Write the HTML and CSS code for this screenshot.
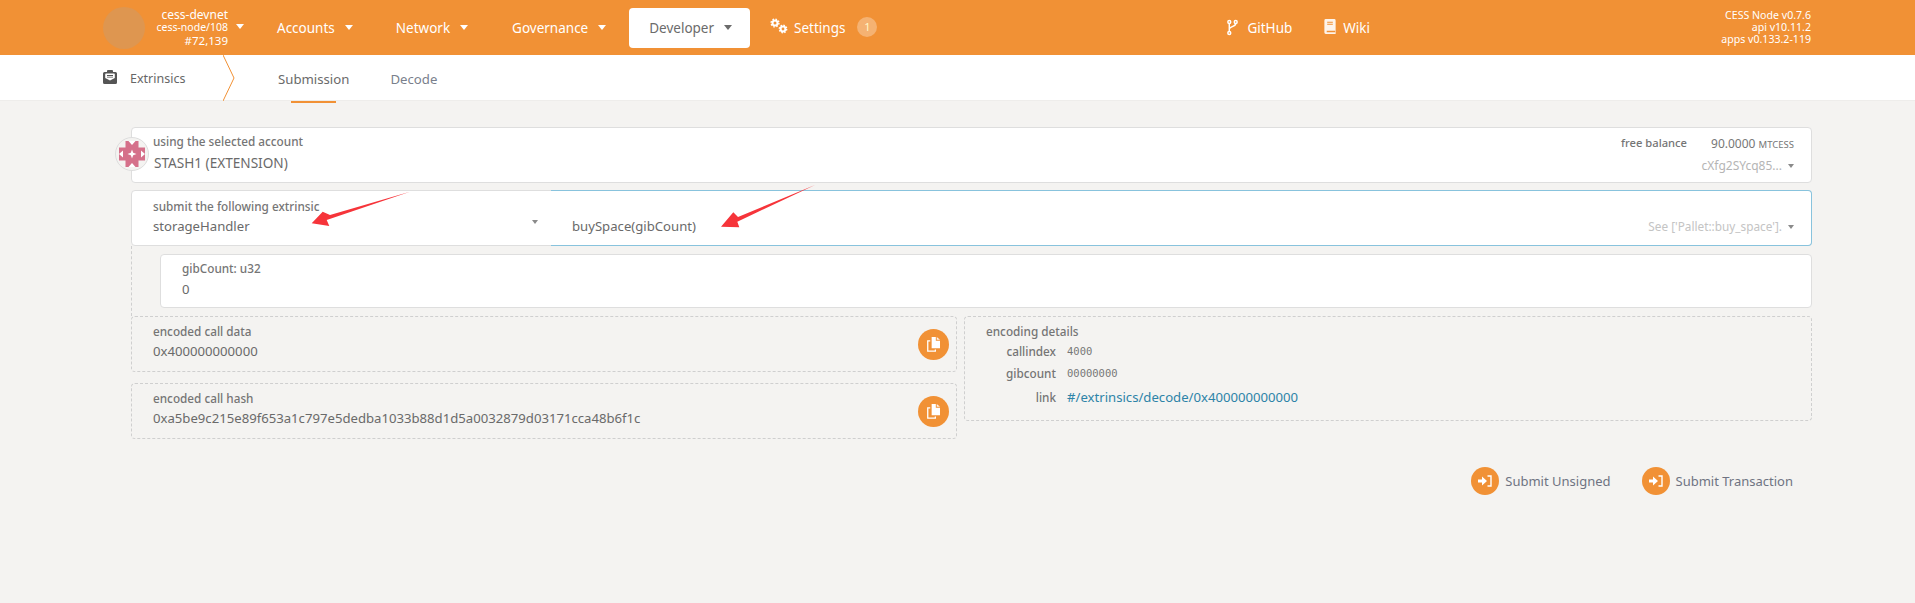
FILE: index.html
```html
<!DOCTYPE html>
<html lang="en">
<head>
<meta charset="utf-8">
<title>Extrinsics</title>
<link rel="stylesheet" href="styles.css">
</head>
<body>
<header class="menu">
  <div class="chain">
    <div class="chain-logo"></div>
    <div class="chain-info">
      <div>cess-devnet</div>
      <div class="chain-node">cess-node/108</div>
      <div>#72,139</div>
    </div>
    <span class="caret chain-caret"></span>
  </div>
  <nav class="nav">
    <a class="nav-item">Accounts<span class="caret"></span></a>
    <a class="nav-item">Network<span class="caret"></span></a>
    <a class="nav-item">Governance<span class="caret"></span></a>
    <a class="nav-item active">Developer<span class="caret"></span></a>
    <a class="nav-settings">
      <svg class="ico-cogs" viewBox="0 0 18 16"><g fill="none" stroke="#fff"><circle cx="5" cy="5" r="2.500" stroke-width="2"/><circle cx="5" cy="5" r="3.900" stroke-width="1.400" stroke-dasharray="1.600 1.460"/><circle cx="13" cy="11" r="2.400" stroke-width="2"/><circle cx="13" cy="11" r="3.700" stroke-width="1.400" stroke-dasharray="1.500 1.400"/></g></svg>
      Settings<span class="badge">1</span>
    </a>
  </nav>
  <div class="links">
    <a class="link-item">
      <svg class="ico-git" viewBox="0 0 12 18"><g fill="none" stroke="#fff" stroke-width="1.600"><circle cx="2.500" cy="3" r="1.600"/><circle cx="2.500" cy="15" r="1.600"/><circle cx="9.500" cy="3" r="1.600"/><path d="M2.500 4.600v8.800M9.500 4.600c0 4-7 3-7 6.400"/></g></svg>
      GitHub
    </a>
    <a class="link-item">
      <svg class="ico-book" viewBox="0 0 12 16"><path fill="#fff" fill-opacity=".9" d="M1.500 0h9A1.500 1.500 0 0 1 12 1.500V16H1.500A1.500 1.500 0 0 1 0 14.500V1.500A1.500 1.500 0 0 1 1.500 0z"/><path fill="#f19135" d="M2.500 12.500h9V14h-9zM3 3h6v1H3zM3 5h6v1H3z"/></svg>
      Wiki
    </a>
  </div>
  <div class="versions">
    <div>CESS Node v0.7.6</div>
    <div>api v10.11.2</div>
    <div>apps v0.133.2-119</div>
  </div>
</header>

<div class="tabs">
  <div class="tabs-title">
    <svg class="ico-inbox" viewBox="0 0 14 14"><path fill="#555" d="M5 0h4a1 1 0 0 1 1 1v1h2.500A1.500 1.500 0 0 1 14 3.500v9a1.500 1.500 0 0 1-1.500 1.500h-11A1.500 1.500 0 0 1 0 12.500v-9A1.500 1.500 0 0 1 1.500 2H4V1a1 1 0 0 1 1-1z"/><path fill="#fff" d="M3 3.500h8a.8.8 0 0 1 .8.800V8L7 10.500 2.200 8V4.300a.8.8 0 0 1 .8-.8z"/><path fill="#555" d="M4 5h6v1H4zM4 6.800h6v.8H4z"/></svg>
    <span>Extrinsics</span>
  </div>
  <svg class="tabs-chevron" viewBox="0 0 12 46"><path d="M0 0l11 23L0 46" fill="none" stroke="#f19135" stroke-width="1"/></svg>
  <a class="tab current">Submission</a>
  <a class="tab">Decode</a>
</div>

<main class="content">
  <div class="row account">
    <svg class="identicon" viewBox="0 0 34 34">
      <circle cx="17" cy="17" r="16.500" fill="#f4f3f1" stroke="#ddd"/>
      <path fill="#d5708a" d="M10.500 4h13v6.500H30v13h-6.500V30h-13v-6.500H4v-13h6.500z"/>
      <path fill="#fff" d="M13.500 4L17 8l3.500-4zM13.500 30l3.500-4 3.500 4zM4 17l4-3.500v7zM30 17l-4-3.500v7zM17 12.500l1.200 3.300 3.300 1.200-3.300 1.200-1.200 3.300-1.200-3.300-3.300-1.200 3.300-1.200z"/>
    </svg>
    <div class="account-main">
      <label class="lbl">using the selected account</label>
      <div class="val account-name">STASH1 (EXTENSION)</div>
    </div>
    <div class="account-side">
      <div class="balance"><span class="lbl balance-lbl">free balance</span><span class="amount">90.0000 <small>MTCESS</small></span></div>
      <div class="addr">cXfg2SYcq85...<span class="caret small"></span></div>
    </div>
  </div>

  <div class="row extrinsic">
    <div class="pallet">
      <label class="lbl">submit the following extrinsic</label>
      <div class="val">storageHandler</div>
      <span class="caret small pallet-caret"></span>
    </div>
    <div class="method">
      <div class="val">buySpace(gibCount)</div>
      <div class="method-hint">See ['Pallet::buy_space'].<span class="caret small"></span></div>
    </div>
  </div>

  <div class="params">
    <div class="param">
      <label class="lbl">gibCount: u32</label>
      <div class="val">0</div>
    </div>
  </div>

  <div class="encoded">
    <div class="encoded-left">
      <div class="dash-box">
        <div><label class="lbl">encoded call data</label><div class="val">0x400000000000</div></div>
        <button class="copy"><svg viewBox="0 0 14 16"><path fill="#fff" d="M5 0h4.500v4H14v8H5z"/><path fill="#fff" fill-opacity=".9" d="M10.500 0L14 3h-3.500z"/><path fill="none" stroke="#fff" stroke-width="1.400" d="M3.500 4H.8v11.200H9V13.500"/></svg></button>
      </div>
      <div class="dash-box">
        <div><label class="lbl">encoded call hash</label><div class="val">0xa5be9c215e89f653a1c797e5dedba1033b88d1d5a0032879d03171cca48b6f1c</div></div>
        <button class="copy"><svg viewBox="0 0 14 16"><path fill="#fff" d="M5 0h4.500v4H14v8H5z"/><path fill="#fff" fill-opacity=".9" d="M10.500 0L14 3h-3.500z"/><path fill="none" stroke="#fff" stroke-width="1.400" d="M3.500 4H.8v11.200H9V13.500"/></svg></button>
      </div>
    </div>
    <div class="details">
      <div class="details-title lbl">encoding details</div>
      <div class="details-grid">
        <span class="lbl">callindex</span><span class="mono">4000</span>
        <span class="lbl">gibcount</span><span class="mono">00000000</span>
        <span class="lbl">link</span><a class="hash-link">#/extrinsics/decode/0x400000000000</a>
      </div>
    </div>
  </div>

  <div class="actions">
    <a class="action"><span class="action-ico"><svg viewBox="0 0 14 12"><path fill="#fff" d="M0 4.500h4v-3L9 6l-5 4.500v-3H0z"/><path fill="none" stroke="#fff" stroke-width="1.400" d="M9.500 1H13v10H9.500"/></svg></span>Submit Unsigned</a>
    <a class="action"><span class="action-ico"><svg viewBox="0 0 14 12"><path fill="#fff" d="M0 4.500h4v-3L9 6l-5 4.500v-3H0z"/><path fill="none" stroke="#fff" stroke-width="1.400" d="M9.500 1H13v10H9.500"/></svg></span>Submit Transaction</a>
  </div>
</main>

<svg class="arrows" viewBox="0 0 1915 603">
  <path fill="#f6343a" d="M322.700 211.700L330 215 410 191.700 326.700 220 329.300 226 311.700 223.300z"/>
  <path fill="#f6343a" d="M733.300 212.300L738 217 815 185 737.300 221.700 739.300 227.300 721 226.700z"/>
</svg>
</body>
</html>
```
FILE: styles.css
```css
* { box-sizing: border-box; }
html, body { margin: 0; padding: 0; }
body {
  position: relative;
  height: 603px;
  overflow: hidden;
  background: #f4f3f1;
  color: #4e4e4e;
  font-family: "Noto Sans", "Open Sans", sans-serif;
  font-size: 13.5px;
}
a { color: inherit; text-decoration: none; }

.caret {
  display: inline-block;
  width: 0; height: 0;
  border-left: 4.500px solid transparent;
  border-right: 4.500px solid transparent;
  border-top: 5px solid currentColor;
  margin-left: 10px;
  vertical-align: 2px;
}
.caret.small {
  border-left-width: 3.500px;
  border-right-width: 3.500px;
  border-top-width: 4px;
  color: #8a8a8a;
}

.menu {
  display: flex;
  align-items: center;
  height: 55px;
  padding-left: 103px;
  padding-right: 104px;
  background: #f19135;
  color: #fff;
}
.chain { display: flex; align-items: center; width: 174px; }
.chain-logo { width: 42px; height: 42px; border-radius: 50%; background: #de9650; }
.chain-info {
  width: 83px;
  text-align: right;
  font-size: 11.500px;
  line-height: 13px;
}
.chain-info div:first-child { font-size: 12px; }
.chain-info .chain-node { font-size: 10.500px; }
.chain-caret { margin-left: 8px; margin-top: -2px; }

.nav { display: flex; align-items: center; }
.nav-item {
  display: flex;
  align-items: center;
  height: 40px;
  margin-right: 43px;
  white-space: nowrap;
}
.nav-item:nth-child(2) { margin-right: 44px; }
.nav-item:nth-child(3) { margin-right: 23px; }
.nav-item .caret { margin-top: -1px; vertical-align: 0; }
.nav-item.active {
  padding: 0 18px 0 20px;
  margin-right: 20px;
  background: #fff;
  color: #6b6b6b;
  border-radius: 4px;
}
.nav-settings { display: flex; align-items: center; white-space: nowrap; }
.ico-cogs { width: 18px; height: 16px; margin-right: 6px; margin-top: -3px; }
.badge {
  width: 20px; height: 20px;
  margin-left: 12px;
  margin-top: -2px;
  border-radius: 50%;
  background: #f5b272;
  color: #fff7c8;
  font-size: 11px;
  line-height: 20px;
  text-align: center;
}

.links { display: flex; align-items: center; margin-left: 350px; }
.link-item { display: flex; align-items: center; margin-right: 32px; }
.ico-git { width: 11px; height: 17px; margin-right: 9px; }
.ico-book { width: 12px; height: 15px; margin-right: 7px; margin-top: -2px; }
.versions {
  margin-left: auto;
  text-align: right;
  font-size: 10.600px;
  line-height: 12px;
  margin-top: -1px;
}

.tabs {
  display: flex;
  align-items: stretch;
  height: 46px;
  padding-left: 103px;
  background: #fff;
  border-bottom: 1px solid #eeedeb;
  position: relative;
}
.tabs-title { display: flex; align-items: center; width: 120px; padding-top: 1px; color: #666; font-size: 12.500px; }
.ico-inbox { width: 14px; height: 14px; margin-right: 13px; margin-top: -2px; }
.tabs-chevron { width: 12px; height: 46px; }
.tab {
  position: relative;
  display: flex;
  align-items: center;
  margin-left: 43px;
  padding-top: 2px;
  color: #7a7f8c;
  font-size: 13.200px;
}
.tab.current { color: #6a6a6a; }
.tab.current::after {
  content: "";
  position: absolute;
  left: 13px; right: 13px;
  bottom: -3px;
  height: 2px;
  background: #f19135;
}
.tab + .tab { margin-left: 41px; }

.content { padding: 26px 103px 0 131px; }

.lbl {
  display: block;
  color: #757575;
  font-size: 11.750px;
  font-weight: 500;
  line-height: 14px;
  white-space: nowrap;
}
.val { color: #6a6a6a; font-size: 13.150px; line-height: 18px; white-space: nowrap; }

.row { background: #fff; border: 1px solid #dedede; border-radius: 4px; }

.account {
  position: relative;
  display: flex;
  justify-content: space-between;
  height: 56px;
  padding: 6px 17px 0 21px;
}
.account-name { margin: 6px 0 0 1px; font-size: 13.600px; }
.identicon { position: absolute; left: -17px; top: 9px; width: 34px; height: 34px; }
.account-side { text-align: right; }
.balance { display: flex; justify-content: flex-end; align-items: center; height: 16px; margin-top: 1px; }
.balance-lbl { font-size: 11.200px; }
.amount { margin-left: 24px; color: #777; font-size: 12px; }
.amount small { font-size: 9.500px; }
.addr { margin-top: 6px; color: #b5b5b5; font-size: 12px; line-height: 18px; }
.addr .caret { margin-left: 6px; vertical-align: 2px; }

.extrinsic {
  display: flex;
  height: 56px;
  margin-top: 7px;
  position: relative;
}
.pallet { position: relative; width: 419px; padding: 8px 21px 0 21px; }
.pallet .val { margin-top: 4px; }
.pallet-caret { position: absolute; right: 13px; top: 29px; }
.method {
  flex: 1;
  display: flex;
  justify-content: space-between;
  padding: 26px 17px 0 21px;
  margin: -1px -1px -1px 0;
  border: 1px solid #88c3dd;
  border-left: 0;
  border-radius: 0 4px 4px 0;
  background: #fff;
}
.method-hint { color: #c4c4c4; font-size: 11.800px; line-height: 18px; white-space: nowrap; }
.method-hint .caret { margin-left: 6px; vertical-align: 2px; }

.params {
  padding: 8px 0 8px 28px;
  border-left: 1px dashed #cfcfcf;
  height: 70px;
}
.param {
  height: 54px;
  padding: 6px 21px 0 21px;
  background: #fff;
  border: 1px solid #dedede;
  border-radius: 4px;
}
.param .val { margin-top: 5px; }

.encoded { display: flex; align-items: flex-start; gap: 7px; }
.encoded-left { flex: 0 0 826px; display: flex; flex-direction: column; gap: 11px; }
.dash-box {
  display: flex;
  justify-content: space-between;
  height: 56px;
  padding: 7px 7px 0 21px;
  border: 1px dashed #cfcfcf;
  border-radius: 4px;
}
.dash-box .val { margin-top: 4px; }
.copy {
  display: flex;
  align-items: center;
  justify-content: center;
  width: 31px; height: 31px;
  margin-top: 5px;
  padding: 0;
  border: 0;
  border-radius: 50%;
  background: #f19135;
}
.copy svg { width: 13px; height: 15px; }

.details {
  flex: 1;
  height: 105px;
  padding: 7px 21px 0 21px;
  border: 1px dashed #cfcfcf;
  border-radius: 4px;
}
.details-grid {
  display: grid;
  grid-template-columns: 70px 1fr;
  column-gap: 11px;
  row-gap: 7px;
  margin-top: 6px;
  align-items: center;
}
.details-grid .lbl { text-align: right; line-height: 15px; }
.mono { font-family: "DejaVu Sans Mono", monospace; font-size: 10.500px; color: #777; line-height: 15px; }
.hash-link { color: #2d83a8; font-size: 13.150px; line-height: 18px; white-space: nowrap; }

.actions { display: flex; justify-content: flex-end; gap: 31px; margin-top: 28px; padding-right: 19px; }
.action { display: flex; align-items: center; color: #6f7382; font-size: 13px; white-space: nowrap; }
.action-ico {
  display: flex;
  align-items: center;
  justify-content: center;
  width: 28px; height: 28px;
  margin-right: 6px;
  border-radius: 50%;
  background: #f19135;
}
.action-ico svg { width: 14px; height: 12px; }

.arrows { position: absolute; left: 0; top: 0; width: 1915px; height: 603px; pointer-events: none; }
```
